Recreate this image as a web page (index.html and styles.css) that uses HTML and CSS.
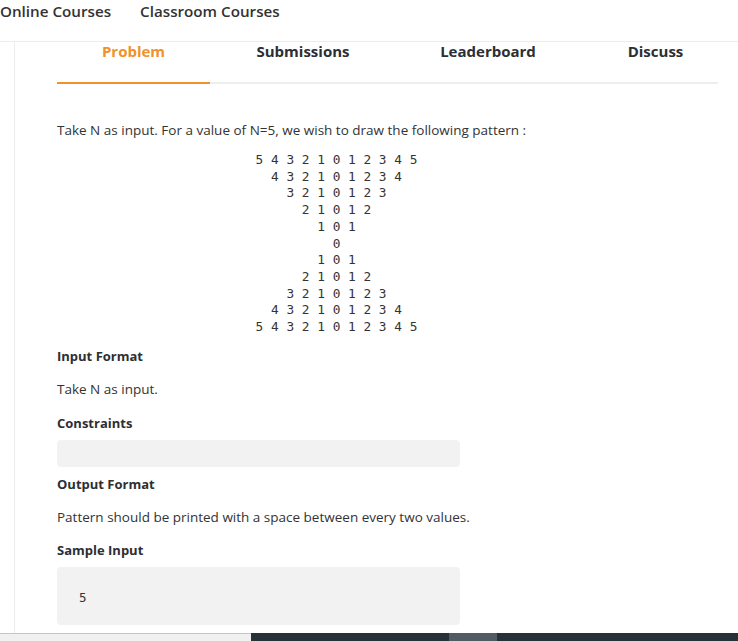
FILE: index.html
```html
<!DOCTYPE html>
<html>
<head>
<meta charset="utf-8">
<link rel="stylesheet" href="styles.css">
</head>
<body>
<div class="page">
  <nav class="topnav">
    <a class="navlink">Online Courses</a>
    <a class="navlink">Classroom Courses</a>
  </nav>
  <div class="main">
    <div class="tabs">
      <div class="tab active">Problem</div>
      <div class="tab">Submissions</div>
      <div class="tab">Leaderboard</div>
      <div class="tab">Discuss</div>
    </div>
    <div class="content">
      <p class="text intro">Take N as input. For a value of N=5, we wish to draw the following pattern :</p>
<pre class="pattern">5 4 3 2 1 0 1 2 3 4 5
4 3 2 1 0 1 2 3 4
3 2 1 0 1 2 3
2 1 0 1 2
1 0 1
0
1 0 1
2 1 0 1 2
3 2 1 0 1 2 3
4 3 2 1 0 1 2 3 4
5 4 3 2 1 0 1 2 3 4 5</pre>
      <h4 class="heading h-input">Input Format</h4>
      <p class="text">Take N as input.</p>
      <h4 class="heading">Constraints</h4>
      <div class="box box-empty"></div>
      <h4 class="heading">Output Format</h4>
      <p class="text">Pattern should be printed with a space between every two values.</p>
      <h4 class="heading h-sample">Sample Input</h4>
      <div class="box box-code"><code>5</code></div>
    </div>
  </div>
  <div class="bottombar">
    <div class="bb-left"></div>
    <div class="bb-right"><div class="bb-thumb"></div></div>
  </div>
</div>
</body>
</html>
```
FILE: styles.css
```css
* { box-sizing: border-box; }
html, body { margin: 0; padding: 0; background: #fff; }
body {
  font-family: "Open Sans", Lato, sans-serif;
  color: #333;
}
.page {
  width: 738px;
  height: 641px;
  display: flex;
  flex-direction: column;
  overflow: hidden;
}
.topnav {
  height: 42px;
  flex: none;
  display: flex;
  gap: 29px;
  border-bottom: 1px solid #ececec;
  padding-left: 0;
}
.navlink {
  font-size: 15.2px;
  font-weight: 600;
  color: #333;
  line-height: 22px;
}
.main {
  flex: 1;
  margin-left: 14px;
  border-left: 1px solid #ececec;
  overflow: hidden;
}
.tabs {
  margin-left: 42px;
  width: 661px;
  display: flex;
  border-bottom: 2px solid #eeeeee;
}
.tab {
  flex: none;
  padding: 0 0 22px;
  font-size: 15px;
  font-weight: 700;
  color: #2c2f33;
  line-height: 18px;
  text-align: center;
  margin-bottom: -2px;
  border-bottom: 2px solid transparent;
}
.tab:nth-child(1) { width: 153px; }
.tab:nth-child(2) { width: 186px; }
.tab:nth-child(3) { width: 184px; }
.tab:nth-child(4) { width: 151px; }
.tab.active {
  color: #f0922c;
  border-bottom-color: #f0922c;
}
.content {
  margin-left: 42px;
  width: 559px;
}
.text {
  margin: 0;
  font-size: 13.5px;
  line-height: 18px;
  color: #333;
}
.intro { margin-top: 37px; }
.pattern {
  margin: 13px 0 0;
  font-family: "DejaVu Sans Mono", monospace;
  font-size: 12.8px;
  line-height: 16.7px;
  text-align: center;
  color: #333;
}
.heading {
  margin: 0;
  font-size: 13px;
  font-weight: 700;
  line-height: 18px;
  color: #2c2f33;
}
.h-input { margin-top: 11px; }
.heading + .text { margin-top: 15px; }
.text + .heading { margin-top: 16px; }
.text + .h-sample { margin-top: 15px; }
.box + .heading { margin-top: 8px; }
.heading + .box { margin-top: 8px; }
.box {
  width: 403px;
  background: #f2f2f2;
  border-radius: 4px;
}
.box-empty { height: 27px; }
.box-code {
  height: 58px;
  padding: 22px 0 0 22px;
  font-family: "DejaVu Sans Mono", monospace;
  font-size: 12.5px;
  line-height: 18px;
}
.bottombar {
  flex: none;
  height: 8px;
  display: flex;
}
.bb-left {
  width: 251px;
  background: #f0f0f0;
  border-top: 1px solid #c6c6c6;
}
.bb-right {
  flex: 1;
  background: #263238;
  position: relative;
}
.bb-thumb {
  position: absolute;
  left: 198px;
  top: 0;
  width: 48px;
  height: 8px;
  background: #505c62;
}
```
